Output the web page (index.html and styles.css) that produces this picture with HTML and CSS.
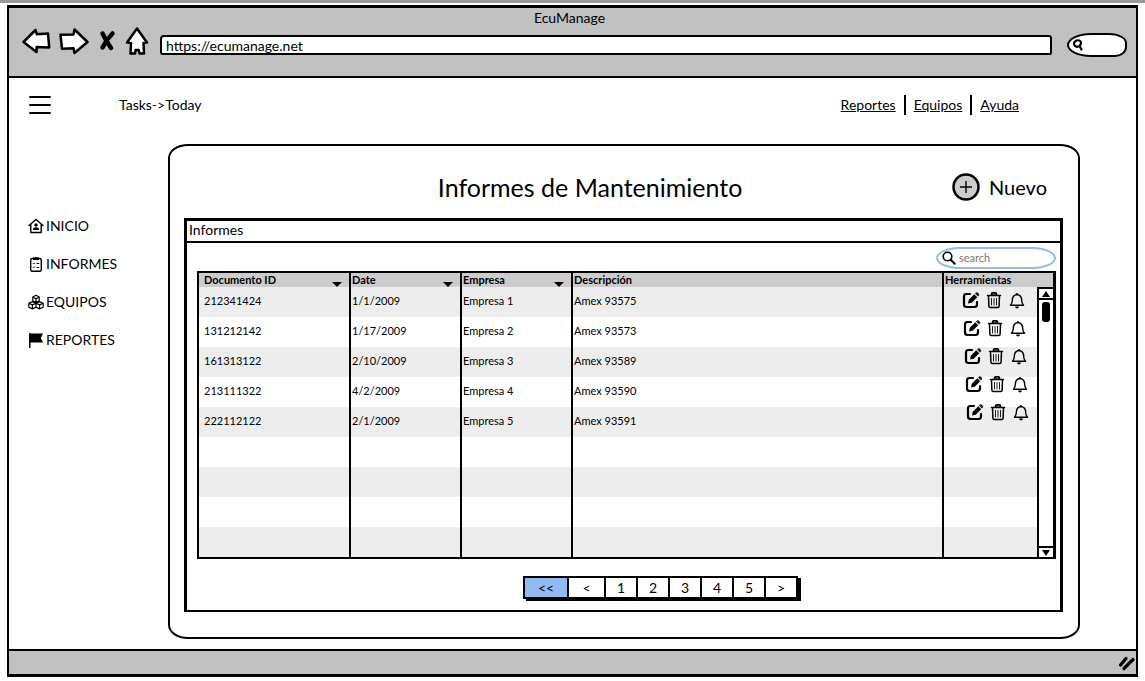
FILE: index.html
```html
<!DOCTYPE html>
<html lang="es">
<head>
<meta charset="utf-8">
<title>EcuManage</title>
<link rel="stylesheet" href="styles.css">
</head>
<body>
<svg class="defs" aria-hidden="true">
  <symbol id="edit" viewBox="0 0 18 18">
    <path d="M8 3H4.500Q2 3 2 5.500V13.500Q2 16 4.500 16H12.500Q15 16 15 13.500V11" fill="none" stroke="#000" stroke-width="2.200" stroke-linecap="round"/>
    <path d="M6 12.500l.8-3.700L12.300 3.300l2.900 2.900-5.500 5.500z"/>
    <path d="M13 2.600l1-1q.8-.8 1.700 0l1.200 1.200q.8.900 0 1.700l-1 1z" fill="#222"/>
  </symbol>
  <symbol id="trash" viewBox="0 0 18 18">
    <g fill="none" stroke="#000" stroke-width="1.500" stroke-linecap="round" stroke-linejoin="round">
      <path d="M2.500 4.500h13M3.500 4.500l.4 10.700q.1 1.300 1.300 1.300h7.600q1.200 0 1.300-1.300l.4-10.700"/>
      <path d="M6.500 4.200V2.700q0-1 1-1h3q1 0 1 1v1.500z" fill="#777"/>
      <path d="M6.500 7.500v6.500M9 7.500v6.500M11.500 7.500v6.500" stroke-width=".9"/>
    </g>
  </symbol>
  <symbol id="bell" viewBox="0 0 18 18">
    <path d="M2.500 14.200q1.800-1.800 1.800-4.700Q4.300 4 9 3.500q4.700.5 4.700 6 0 2.900 1.800 4.700z" fill="none" stroke="#000" stroke-width="1.400" stroke-linejoin="round"/>
    <path d="M8.300 2h1.400v2H8.300zM7 15.500h4q-.4 1.900-2 1.900t-2-1.900z"/>
  </symbol>
</svg>
<div class="window">
  <header class="chrome">
    <div class="title">EcuManage</div>
    <div class="toolbar">
      <button class="icon-btn" aria-label="Atrás"><svg width="30" height="28" viewBox="0 0 30 28"><path d="M1.500 15L13.500 3l1.300 4.200 11.200-.7 1.200 14-12.500-.5-.2 5z" class="arrow"/></svg></button>
      <button class="icon-btn" aria-label="Adelante"><svg width="30" height="28" viewBox="0 0 30 28"><path d="M1.500 7.800l13-.4L15.500 2.500 28.500 15 15.500 26l-1-4.800-11.500.5z" class="arrow"/></svg></button>
      <button class="icon-btn" aria-label="Detener"><svg width="22" height="28" viewBox="0 0 22 28"><path d="M6.500 6.500q4 8 8.500 14.500M16.500 6.500Q10 13 6.500 20.500" fill="none" stroke="#000" stroke-width="4.500" stroke-linecap="round"/></svg></button>
      <button class="icon-btn" aria-label="Inicio"><svg width="24" height="30" viewBox="0 0 24 30"><path d="M12 2.500L22 16.500l-3.500.5.500 10.500h-4.500l-.8-3.500h-3l-.7 3.500H5.500L6 17l-4-.5z" class="arrow"/></svg></button>
      <input class="address" type="text" value="https://ecumanage.net" aria-label="Dirección">
      <label class="browser-search"><svg width="12" height="14" viewBox="0 0 12 14"><path d="M8 7.500Q5 10 2.500 7.500 1 4 4.500 2.500 8 1.500 9 4.500q.2 2-1.500 3.500l2 3.500" fill="none" stroke="#000" stroke-width="2.200" stroke-linecap="round"/></svg><input type="text" aria-label="Buscar en la web"></label>
    </div>
  </header>
  <div class="topnav">
    <button class="menu" aria-label="Menú"><svg width="22" height="20" viewBox="0 0 22 20"><path d="M1 2h20M1 10h20M1 18h20" stroke="#000" stroke-width="2" stroke-linecap="round"/></svg></button>
    <span class="crumb">Tasks-&gt;Today</span>
    <nav class="links"><a href="#">Reportes</a><a href="#">Equipos</a><a href="#">Ayuda</a></nav>
  </div>
  <div class="body">
    <nav class="side">
      <a href="#"><svg width="16" height="16" viewBox="0 0 16 16"><path d="M1 7.500L8 1.500l7 6M2.800 6.500V14.500h10.400V6.500" fill="none" stroke="#000" stroke-width="1.400" stroke-linejoin="round" stroke-linecap="round"/><circle cx="8" cy="7" r="1.700"/><path d="M4.800 12q.2-2.800 3.200-2.800t3.200 2.800z"/></svg>INICIO</a>
      <a href="#"><svg width="16" height="16" viewBox="0 0 16 16"><rect x="2.700" y="2.500" width="10.600" height="12.700" rx="1.500" fill="none" stroke="#000" stroke-width="1.400"/><path d="M5 1.500h2q1-1.500 2 0h2V4H5z"/><path d="M4.800 7.300l.8.800 1.200-1.400M4.800 11l.8.800L6.800 10.400M8.500 7.500h2.800M8.500 11.500h2.800" fill="none" stroke="#000" stroke-width="1"/></svg>INFORMES</a>
      <a href="#"><svg width="16" height="16" viewBox="0 0 16 16"><path d="M4.800 3L8 1.300 11.200 3v4L8 8.600 4.800 7zM4.800 3L8 4.700 11.200 3M8 4.700v3.600M.8 9.200l3.600-1.600L8 9.200v4l-3.600 1.700L.8 13.200zM.8 9.200l3.600 1.700L8 9.200M4.400 10.900v3.700M8 9.200l3.600-1.600 3.600 1.600v4l-3.600 1.700L8 13.200zM8 9.200l3.600 1.700 3.600-1.700M11.600 10.900v3.700" fill="none" stroke="#000" stroke-width="1.200" stroke-linejoin="round"/></svg>EQUIPOS</a>
      <a href="#"><svg width="16" height="16" viewBox="0 0 16 16"><path d="M1 1h1.500v.5H15l-2.200 4.500 2.200 4.500H2.500V16H1z"/></svg>REPORTES</a>
    </nav>
    <main class="card">
      <div class="card-head">
        <h1>Informes de Mantenimiento</h1>
        <button class="new"><svg width="30" height="30" viewBox="0 0 30 30"><circle cx="15" cy="15" r="12.500" fill="#ccc" stroke="#000" stroke-width="2.500"/><path d="M9 15h12M15 9v12" stroke="#000" stroke-width="1.400"/></svg>Nuevo</button>
      </div>
      <section class="panel">
        <h2>Informes</h2>
        <label class="search"><svg width="14" height="14" viewBox="0 0 14 14"><circle cx="5.500" cy="5.500" r="4.300" fill="none" stroke="#000" stroke-width="1.600"/><path d="M8.700 8.700l4 4" stroke="#000" stroke-width="2" stroke-linecap="round"/></svg><input type="text" placeholder="search" aria-label="search"></label>
        <div class="table-box">
          <table>
            <colgroup><col class="c-id"><col class="c-mid"><col class="c-mid"><col><col class="c-tools"><col class="c-scroll"></colgroup>
            <thead><tr><th>Documento ID<i class="sort"></i></th><th>Date<i class="sort"></i></th><th>Empresa<i class="sort"></i></th><th>Descripción</th><th colspan="2">Herramientas</th></tr></thead>
            <tbody>
              <tr><td>212341424</td><td>1/1/2009</td><td>Empresa 1</td><td>Amex 93575</td>
                <td class="tool-cell"><div class="tools">
                  <div><button aria-label="Editar"><svg><use href="#edit"/></svg></button><button aria-label="Borrar"><svg><use href="#trash"/></svg></button><button aria-label="Avisar"><svg><use href="#bell"/></svg></button></div>
                  <div><button aria-label="Editar"><svg><use href="#edit"/></svg></button><button aria-label="Borrar"><svg><use href="#trash"/></svg></button><button aria-label="Avisar"><svg><use href="#bell"/></svg></button></div>
                  <div><button aria-label="Editar"><svg><use href="#edit"/></svg></button><button aria-label="Borrar"><svg><use href="#trash"/></svg></button><button aria-label="Avisar"><svg><use href="#bell"/></svg></button></div>
                  <div><button aria-label="Editar"><svg><use href="#edit"/></svg></button><button aria-label="Borrar"><svg><use href="#trash"/></svg></button><button aria-label="Avisar"><svg><use href="#bell"/></svg></button></div>
                  <div><button aria-label="Editar"><svg><use href="#edit"/></svg></button><button aria-label="Borrar"><svg><use href="#trash"/></svg></button><button aria-label="Avisar"><svg><use href="#bell"/></svg></button></div>
                </div></td>
                <td class="scroll" rowspan="9"><div class="bar"><span class="cap"><svg width="10" height="8"><path d="M5 1l4 6H1z"/></svg></span><span class="thumb"></span><span class="cap end"><svg width="10" height="8"><path d="M1 1h8L5 7z"/></svg></span></div></td></tr>
              <tr><td>131212142</td><td>1/17/2009</td><td>Empresa 2</td><td>Amex 93573</td><td></td></tr>
              <tr><td>161313122</td><td>2/10/2009</td><td>Empresa 3</td><td>Amex 93589</td><td></td></tr>
              <tr><td>213111322</td><td>4/2/2009</td><td>Empresa 4</td><td>Amex 93590</td><td></td></tr>
              <tr><td>222112122</td><td>2/1/2009</td><td>Empresa 5</td><td>Amex 93591</td><td></td></tr>
              <tr><td></td><td></td><td></td><td></td><td></td></tr>
              <tr><td></td><td></td><td></td><td></td><td></td></tr>
              <tr><td></td><td></td><td></td><td></td><td></td></tr>
              <tr><td></td><td></td><td></td><td></td><td></td></tr>
            </tbody>
          </table>
        </div>
        <nav class="pager" aria-label="Páginas"><button class="wide on">&lt;&lt;</button><button class="mid">&lt;</button><button>1</button><button>2</button><button>3</button><button>4</button><button>5</button><button>&gt;</button></nav>
      </section>
    </main>
  </div>
  <footer class="status"><svg width="18" height="16" viewBox="0 0 18 16"><path d="M2.500 10L8 3.500M6 13.500l9-9" stroke="#000" stroke-width="3.200" stroke-linecap="round"/></svg></footer>
</div>
</body>
</html>
```
FILE: styles.css
```css
* { box-sizing: border-box; }
body {
  margin: 0;
  min-height: 100vh;
  padding: 2px 7px 5px;
  border-top: 3px solid #999;
  display: flex;
  flex-direction: column;
  background: #fff;
  color: #000;
  font: 14px/16px Lato, "Noto Sans", sans-serif;
}
button, input { font: inherit; color: inherit; }
button { padding: 0; border: 0; background: none; }
a { color: inherit; }
svg { display: block; flex: none; }
.defs { position: absolute; width: 0; height: 0; }

.window { flex: 1; display: flex; flex-direction: column; border: 3px solid #000; border-left-width: 2px; border-right-width: 2px; }
.chrome { background: #c1c1c1; border-bottom: 2px solid #000; height: 70px; }
.title { padding: 2px 6px 0 0; text-align: center; }
.toolbar { display: flex; align-items: center; padding: 0 9px 0 13px; height: 30px; }
.icon-btn + .icon-btn { margin-left: 7px; }
.arrow { fill: #fff; stroke: #000; stroke-width: 2.5; stroke-linejoin: round; }
.address {
  flex: 1;
  min-width: 0;
  height: 20px;
  margin: 8px 15px 0 11px;
  padding: 0 4px;
  border: 2px solid #000;
  border-radius: 4px 3px 2px 3px;
  background: #fff;
}
.browser-search {
  display: flex;
  align-items: center;
  width: 60px;
  height: 24px;
  margin-top: 7px;
  padding-left: 3px;
  border: 2px solid #000;
  border-radius: 24px 18px 12px 24px / 12px 10px 10px 12px;
  background: #fff;
}
.browser-search input { flex: 1; min-width: 0; border: 0; background: none; }

.topnav { display: flex; align-items: center; padding: 17px 109px 0 20px; }
.crumb { margin-left: 68px; }
.links { display: flex; margin-left: auto; }
.links a { padding: 2px 8px; }
.links a + a { border-left: 2px solid #000; }

.body { flex: 1; display: flex; padding: 29px 56px 10px 19px; }
.side { display: flex; flex-direction: column; gap: 22px; width: 140px; padding-top: 74px; }
.side a { display: flex; align-items: center; gap: 2px; text-decoration: none; }

.card {
  flex: 1;
  min-width: 0;
  display: flex;
  flex-direction: column;
  padding: 16px 15px 25px 14px;
  border: 2px solid #000;
  border-radius: 20px / 14px;
}
.card-head { display: grid; grid-template-columns: 5fr auto 6fr; align-items: center; height: 56px; padding: 0 16px 6px 0; }
.card-head h1 { grid-column: 2; margin: 0; font-size: 25px; line-height: 32px; font-weight: 400; }
.new { justify-self: end; display: flex; align-items: center; gap: 8px; font-size: 20px; line-height: 24px; }

.panel { flex: 1; display: flex; flex-direction: column; border: 3px solid #000; border-bottom-width: 2px; }
.panel h2 { margin: 0; padding: 1px 2px 3px; border-bottom: 2px solid #000; font-size: 14px; line-height: 16px; font-weight: 400; }
.search {
  align-self: flex-end;
  display: flex;
  align-items: center;
  gap: 3px;
  width: 120px;
  height: 22px;
  margin: 4px 4px 2px;
  padding: 0 4px;
  border: 2px solid #93bbf2;
  border-radius: 24px / 11px;
  font-size: 11px;
}
.search input { flex: 1; min-width: 0; padding: 0; border: 0; background: none; }
.search input::placeholder { color: #777; opacity: 1; }

.table-box { margin: 0 4px 0 10px; border: 2px solid #000; border-right-width: 3px; }
table { width: 100%; table-layout: fixed; border-collapse: collapse; font-size: 11px; line-height: 14px; }
.c-id { width: 151px; }
.c-mid { width: 111px; }
.c-tools { width: 95px; }
.c-scroll { width: 15px; }
th { position: relative; padding: 0 1px 1px; line-height: 13px; text-align: left; background: #ccc; }
td { height: 30px; padding: 0 1px 2px; }
th:first-child, td:first-child { padding-left: 5px; }
th + th, td + td { border-left: 2px solid #000; }
tbody tr:nth-child(odd) { background: #ededed; }
.sort { position: absolute; right: 7px; bottom: 0; border: 5px solid transparent; border-top-color: #000; border-bottom: 0; }
.tool-cell { position: relative; }
.tools { position: absolute; top: 4px; left: 18px; display: grid; gap: 10px; }
.tools div { display: flex; gap: 5px; }
.tools div:nth-child(2) { padding-left: 1px; }
.tools div:nth-child(3) { padding-left: 2px; }
.tools div:nth-child(4) { padding-left: 3px; }
.tools div:nth-child(5) { padding-left: 4px; }
.tools svg { width: 18px; height: 18px; }
.scroll { position: relative; padding: 0; background: #fff; }
.bar { position: absolute; inset: 0; display: flex; flex-direction: column; border-top: 2px solid #000; }
.cap { display: grid; place-items: center; height: 11px; border-bottom: 2px solid #000; }
.cap.end { margin-top: auto; border-top: 2px solid #000; border-bottom: 0; }
.thumb { height: 20px; margin: 2px 3px; border-radius: 3px; background: #000; }

.pager { align-self: center; display: flex; margin: 17px 0 11px 74px; border: 2px solid #000; box-shadow: 3px 2px 0 #000; }
.pager button { width: 32px; height: 19px; background: #fff; }
.pager .mid { width: 37px; }
.pager .wide { width: 42px; }
.pager .on { background: #93bbf2; }
.pager button + button { border-left: 2px solid #000; }

.status { display: flex; align-items: center; justify-content: flex-end; height: 25px; border-top: 2px solid #000; background: #c1c1c1; }
```
